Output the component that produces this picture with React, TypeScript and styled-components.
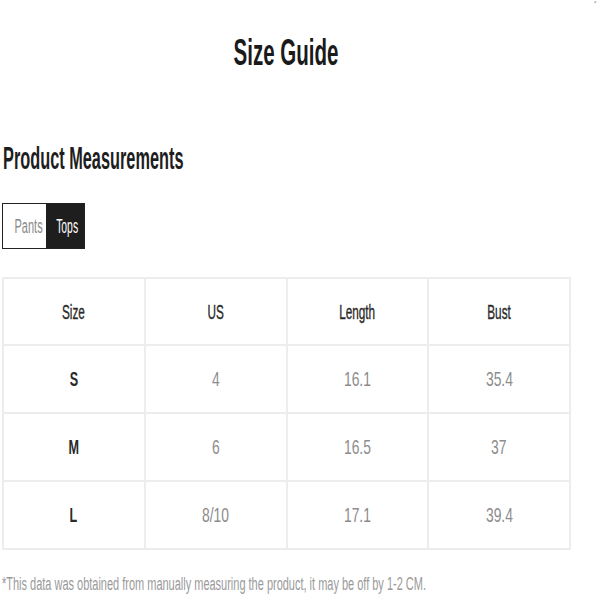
import React, { useState } from 'react';
import styled, { createGlobalStyle } from 'styled-components';

const GlobalStyle = createGlobalStyle`
  html, body {
    margin: 0;
    padding: 0;
    background: #ffffff;
  }
  body {
    font-family: "Liberation Sans", Arial, sans-serif;
    color: #222;
  }
`;

// the shop font is a narrow grotesque; squeeze Liberation Sans to its width
const Narrow = styled.span<{ $x: number; $origin?: string }>`
  display: inline-block;
  white-space: nowrap;
  transform: scaleX(${p => p.$x});
  transform-origin: ${p => p.$origin || 'center'};
`;

const Page = styled.div`
  position: relative;
  width: 600px;
  height: 600px;
  box-sizing: border-box;
  padding: 33px 29px 0 2px;
  overflow: hidden;
`;

const Corner = styled.span`
  position: absolute;
  top: 0;
  right: 3px;
  font-size: 11px;
  color: #555;
`;

const Title = styled.h1`
  margin: 0;
  height: 40px;
  text-align: center;
  font-size: 36px;
  line-height: 40px;
  font-weight: 700;
  color: #1a1a1a;
`;

const Subtitle = styled.h2`
  margin: 67px 0 0 1px;
  font-size: 32px;
  line-height: 36px;
  font-weight: 700;
  color: #1e1e1e;
`;

const Tabs = styled.div`
  display: flex;
  margin-top: 27px;
  height: 46px;
  width: max-content;
  border: 1px solid #222;
  box-sizing: border-box;
`;

const Tab = styled.button<{ $active?: boolean; $w: number }>`
  width: ${p => p.$w}px;
  border: none;
  margin: 0;
  padding: 0;
  font-family: inherit;
  font-size: 20px;
  cursor: pointer;
  background: ${p => (p.$active ? '#1e1e1e' : '#fff')};
  color: ${p => (p.$active ? '#fff' : '#8a8a8a')};
`;

const Table = styled.table`
  margin-top: 28px;
  width: 569px;
  border-collapse: collapse;
  table-layout: fixed;
`;

const Cell = styled.td<{ $strong?: boolean }>`
  height: 66px;
  padding: 0;
  border: 2px solid #ededed;
  text-align: center;
  vertical-align: middle;
  font-size: 21px;
  font-weight: ${p => (p.$strong ? 700 : 400)};
  color: ${p => (p.$strong ? '#2a2a2a' : '#8c8c8c')};
`;

const HeadCell = styled.th`
  height: 65px;
  padding: 0;
  border: 2px solid #ededed;
  text-align: center;
  vertical-align: middle;
  font-size: 21px;
  font-weight: 400;
  color: #2a2a2a;
  -webkit-text-stroke: 0.4px #2a2a2a;
`;

const Note = styled.p`
  margin: 24px 0 0;
  font-size: 18px;
  line-height: 20px;
  color: #9a9a9a;
`;

const rows = {
  Tops: [
    ['S', '4', '16.1', '35.4'],
    ['M', '6', '16.5', '37'],
    ['L', '8/10', '17.1', '39.4'],
  ],
  Pants: [
    ['S', '4', '38.2', '26.4'],
    ['M', '6', '38.6', '28'],
    ['L', '8/10', '39.0', '29.9'],
  ],
};

export default function App() {
  const [tab, setTab] = useState<'Pants' | 'Tops'>('Tops');
  const headers = tab === 'Tops' ? ['Size', 'US', 'Length', 'Bust'] : ['Size', 'US', 'Length', 'Waist'];

  return (
    <Page>
      <GlobalStyle />
      <Corner>ˊ</Corner>
      <Title>
        <Narrow $x={0.57}>Size Guide</Narrow>
      </Title>
      <Subtitle>
        <Narrow $x={0.51} $origin="left">Product Measurements</Narrow>
      </Subtitle>
      <Tabs>
        <Tab $w={43} $active={tab === 'Pants'} onClick={() => setTab('Pants')}>
          <Narrow $x={0.55}>Pants</Narrow>
        </Tab>
        <Tab $w={38} $active={tab === 'Tops'} onClick={() => setTab('Tops')}>
          <Narrow $x={0.52}>Tops</Narrow>
        </Tab>
      </Tabs>
      <Table>
        <thead>
          <tr>
            {headers.map(h => (
              <HeadCell key={h}>
                <Narrow $x={0.56}>{h}</Narrow>
              </HeadCell>
            ))}
          </tr>
        </thead>
        <tbody>
          {rows[tab].map(r => (
            <tr key={r[0]}>
              {r.map((v, i) => (
                <Cell key={i} $strong={i === 0}>
                  <Narrow $x={i === 0 ? 0.6 : 0.66}>{v}</Narrow>
                </Cell>
              ))}
            </tr>
          ))}
        </tbody>
      </Table>
      <Note>
        <Narrow $x={0.61} $origin="left">
          *This data was obtained from manually measuring the product, it may be off by 1-2 CM.
        </Narrow>
      </Note>
    </Page>
  );
}
